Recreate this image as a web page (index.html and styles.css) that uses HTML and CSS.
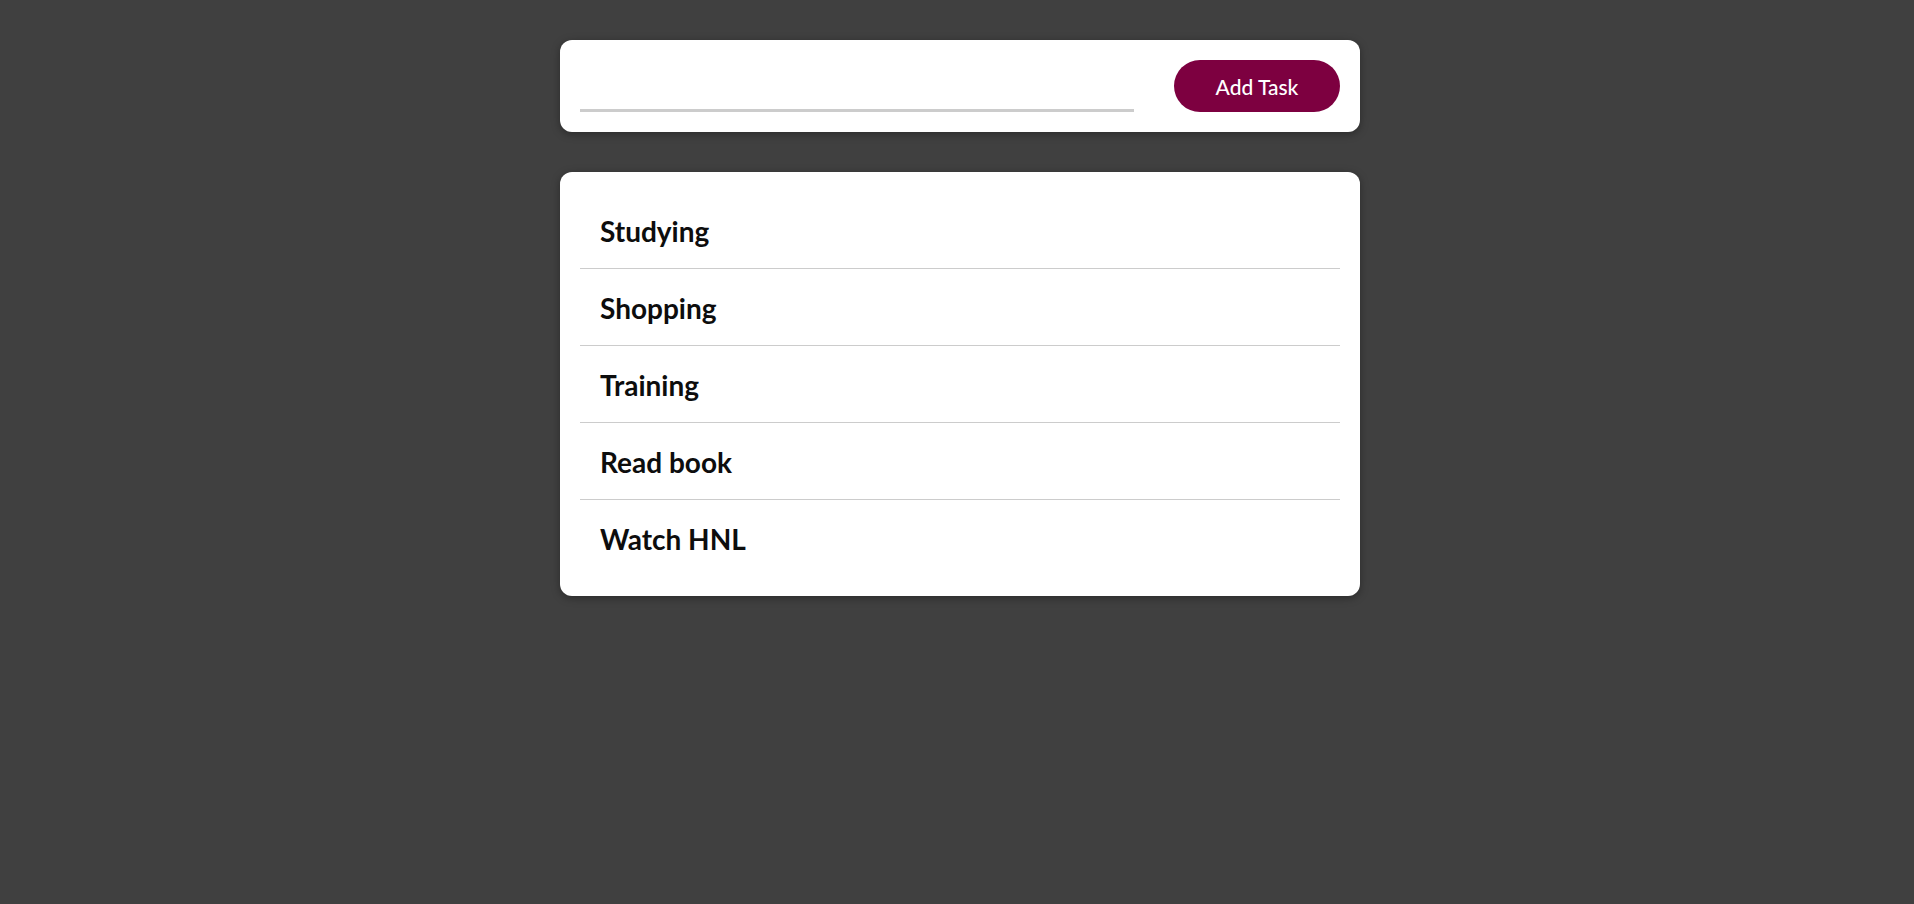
FILE: index.html
```html
<!DOCTYPE html>
<html lang="en">
<head>
<meta charset="utf-8">
<title>Tasks</title>
<link rel="stylesheet" href="styles.css">
</head>
<body>
<main class="app">
  <form class="card add-form">
    <input class="task-input" type="text" aria-label="New task">
    <button class="add-btn" type="button">Add Task</button>
  </form>
  <ul class="card task-list">
    <li class="task">Studying</li>
    <li class="task">Shopping</li>
    <li class="task">Training</li>
    <li class="task">Read book</li>
    <li class="task">Watch HNL</li>
  </ul>
</main>
</body>
</html>
```
FILE: styles.css
```css
html, body {
  margin: 0;
  padding: 0;
  background: #404040;
  font-family: Lato, "Open Sans", sans-serif;
}

body {
  padding-left: 6px;
}

.app {
  width: 800px;
  margin: 40px auto;
  display: flex;
  flex-direction: column;
  gap: 40px;
}

.card {
  background: #ffffff;
  border-radius: 12px;
  box-shadow: 0 2px 8px rgba(0, 0, 0, 0.35);
  padding: 20px;
  box-sizing: border-box;
}

.add-form {
  display: flex;
  align-items: stretch;
  gap: 40px;
  margin: 0;
}

.task-input {
  flex: 1;
  border: none;
  border-bottom: 3px solid #cccccc;
  outline: none;
  font: inherit;
  font-size: 22px;
  padding: 0;
  background: transparent;
}

.add-btn {
  width: 166px;
  height: 52px;
  border: none;
  border-radius: 26px;
  background: #7d0040;
  color: #ffffff;
  font-family: Lato, "Open Sans", sans-serif;
  font-size: 21px;
  font-weight: 500;
  cursor: pointer;
}

.task-list {
  list-style: none;
  margin: 0;
}

.task {
  padding: 20px 20px;
  height: 36px;
  line-height: 38px;
  font-size: 28px;
  font-weight: 700;
  color: #0d0d0d;
  border-bottom: 1px solid #cccccc;
}

.task:last-child {
  border-bottom: none;
}
```
